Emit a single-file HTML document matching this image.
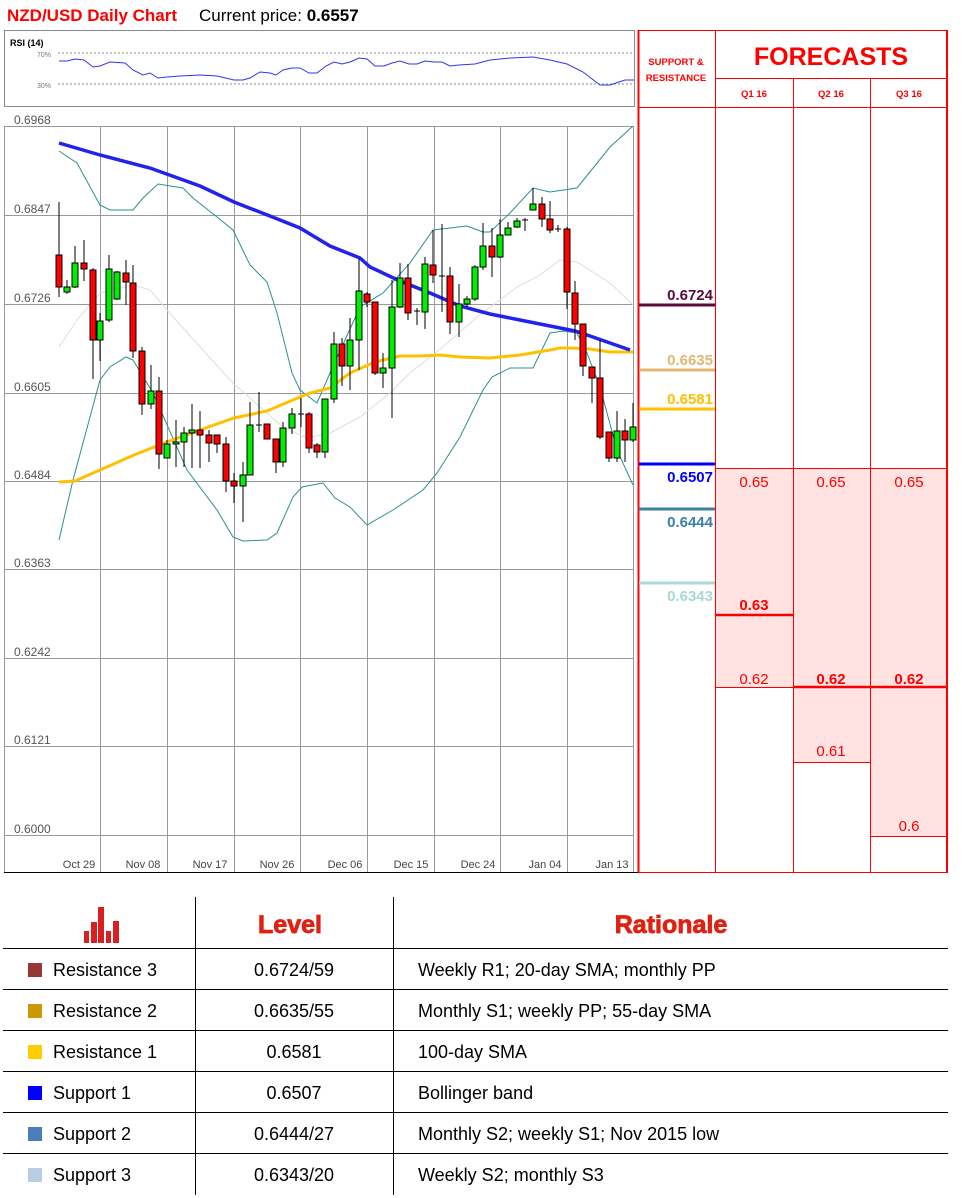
<!DOCTYPE html>
<html><head><meta charset="utf-8"><style>
body{margin:0;background:#fff;width:965px;height:1198px;overflow:hidden;font-family:"Liberation Sans",sans-serif;position:relative}
</style></head><body>
<svg width="965" height="875" style="position:absolute;left:0;top:0" font-family="Liberation Sans, sans-serif">
<text x="7" y="21" font-size="17" font-weight="bold" fill="#ff0000">NZD/USD Daily Chart</text>
<text x="199" y="21" font-size="17" fill="#000">Current price: <tspan font-weight="bold">0.6557</tspan></text>
<rect x="4.5" y="30.5" width="630" height="76" fill="#fff" stroke="#888"/>
<text x="10" y="46" font-size="9" font-weight="bold" fill="#000">RSI (14)</text>
<text x="37" y="57" font-size="7" fill="#777">70%</text>
<text x="37" y="88" font-size="7" fill="#777">30%</text>
<line x1="58" y1="53" x2="634" y2="53" stroke="#666" stroke-dasharray="2,2" stroke-width="0.8"/>
<line x1="58" y1="84" x2="634" y2="84" stroke="#666" stroke-dasharray="2,2" stroke-width="0.8"/>
<polyline fill="none" stroke="#3333ee" stroke-width="1" points="59,61 67,61 75,59 84,60 93,67 100,66 110,62 125,63 133,70 143,75 150,73 158,78 167,77 180,76 200,75 217,76 234,80 243,80 250,78 260,72 270,73 276,75 283,70 292,68 300,68 309,73 317,73 326,66 334,62 342,64 350,62 359,58 367,59 375,66 384,66 392,63 400,61 409,64 417,64 425,61 434,62 442,62 450,66 459,65 475,64 490,60 510,58 533,57 550,60 567,64 583,72 600,85 610,85 625,80 634,80"/>
<g stroke="#999" stroke-width="1">
<line x1="4" y1="126.5" x2="634" y2="126.5"/><line x1="4" y1="215.5" x2="634" y2="215.5"/><line x1="4" y1="304.5" x2="634" y2="304.5"/><line x1="4" y1="393.5" x2="634" y2="393.5"/><line x1="4" y1="481.5" x2="634" y2="481.5"/><line x1="4" y1="569.5" x2="634" y2="569.5"/><line x1="4" y1="658.5" x2="634" y2="658.5"/><line x1="4" y1="746.5" x2="634" y2="746.5"/><line x1="4" y1="835.5" x2="634" y2="835.5"/>
<line x1="100.5" y1="126" x2="100.5" y2="872"/><line x1="167.5" y1="126" x2="167.5" y2="872"/><line x1="234.5" y1="126" x2="234.5" y2="872"/><line x1="300.5" y1="126" x2="300.5" y2="872"/><line x1="367.5" y1="126" x2="367.5" y2="872"/><line x1="434.5" y1="126" x2="434.5" y2="872"/><line x1="500.5" y1="126" x2="500.5" y2="872"/><line x1="567.5" y1="126" x2="567.5" y2="872"/><line x1="633.5" y1="126" x2="633.5" y2="872"/>
<line x1="4.5" y1="126" x2="4.5" y2="872"/>
</g>
<line x1="4" y1="872.5" x2="638" y2="872.5" stroke="#000"/>
<g font-size="12" fill="#555">
<text x="14" y="124">0.6968</text><text x="14" y="213">0.6847</text><text x="14" y="302">0.6726</text><text x="14" y="391">0.6605</text><text x="14" y="479">0.6484</text><text x="14" y="567">0.6363</text><text x="14" y="656">0.6242</text><text x="14" y="744">0.6121</text><text x="14" y="833">0.6000</text>
</g>
<g font-size="11" fill="#444" text-anchor="middle">
<text x="79" y="868">Oct 29</text><text x="143" y="868">Nov 08</text><text x="210" y="868">Nov 17</text><text x="277" y="868">Nov 26</text><text x="345" y="868">Dec 06</text><text x="411" y="868">Dec 15</text><text x="478" y="868">Dec 24</text><text x="545" y="868">Jan 04</text><text x="612" y="868">Jan 13</text>
</g>
<polyline fill="none" stroke="#dddddd" stroke-width="1" points="59,347 77,320 100,293 133,285 150,290 167,310 200,347 233,383 260,407 283,427 307,438 330,433 360,417 390,393 410,373 443,347 477,317 517,287 537,277 560,260 577,262 610,283 633,305"/>
<polyline fill="none" stroke="#2a9090" stroke-width="1" points="59,151 77,163 100,205 110,210 133,210 143,198 158,184 183,188 193,198 217,217 233,230 250,265 267,282 277,313 292,373 300,390 317,403 330,373 360,307 383,293 410,263 433,230 467,226 483,232 490,232 510,213 533,188 550,192 577,188 610,147 633,126"/>
<polyline fill="none" stroke="#2a9090" stroke-width="1" points="59,540 73,480 100,380 110,367 126,357 133,360 153,393 187,470 217,510 233,537 243,541 267,540 277,533 293,497 302,487 323,483 335,498 350,507 367,525 393,510 423,490 437,473 460,437 483,390 492,377 510,368 533,368 550,333 563,331 577,333 587,353 600,387 617,450 633,485"/>
<polyline fill="none" stroke="#ffc000" stroke-width="3" points="59,482 75,481 100,470 134,455 167,442 200,430 234,418 267,411 300,397 310,393 330,388 350,373 375,362 400,356 420,356 440,355 460,357 490,358 520,355 550,350 560,348 570,348 590,349 610,352 633,352"/>
<polyline fill="none" stroke="#2222ee" stroke-width="3.5" points="59,143 100,155 150,168 200,186 234,202 275,218 300,228 330,246 360,258 370,267 400,281 430,293 460,306 490,314 520,320 550,326 575,331 590,336 610,343 630,350"/>
<path stroke="#000" stroke-width="1" fill="none" d="M59 202V297M67 280V294M75 246V288M84 240V281M93 268V379M100 313V361M109 255V322M117 271V300M126 260V305M133 265V358M142 347V415M151 365V409M159 377V469M167 440V458M176 420V467M184 427V467M192 404V468M200 411V468M209 430V462M217 435V453M226 437V492M234 473V503M243 462V522M250 402V475M259 392V432M267 424V439M276 439V473M283 422V467M292 408V434M301 398V427M309 412V453M317 443V458M325 399V458M334 332V403M342 338V386M350 318V390M359 259V370M367 292V307M375 302V375M383 353V388M392 280V418M400 263V308M408 264V320M417 308V325M425 257V329M433 230V283M442 224V312M450 267V334M459 284V337M467 296V307M475 265V301M483 223V270M492 228V277M500 219V258M508 222V235M517 218V228M525 218V231M533 188V210M542 197V227M550 201V233M558 225V232M567 227V309M575 281V340M583 324V376M592 367V403M600 340V439M609 432V462M617 411V462M625 419V462M633 403V442M256 425h6M298 414h6M414 311h6M439 276h6M522 220h6M555 229h6"/>
<g fill="#ff0000" stroke="#000" stroke-width="1">
<rect x="56" y="255" width="6" height="32"/><rect x="81" y="263" width="6" height="6"/><rect x="90" y="270" width="6" height="70"/><rect x="123" y="273" width="6" height="9"/><rect x="130" y="283" width="6" height="68"/><rect x="139" y="351" width="6" height="53"/><rect x="156" y="391" width="6" height="63"/><rect x="197" y="430" width="6" height="5"/><rect x="206" y="435" width="6" height="8"/><rect x="214" y="435" width="6" height="9"/><rect x="223" y="444" width="6" height="37"/><rect x="231" y="481" width="6" height="5"/><rect x="264" y="424" width="6" height="15"/><rect x="273" y="439" width="6" height="23"/><rect x="306" y="414" width="6" height="34"/><rect x="314" y="445" width="6" height="7"/><rect x="339" y="344" width="6" height="22"/><rect x="364" y="294" width="6" height="8"/><rect x="372" y="302" width="6" height="71"/><rect x="405" y="278" width="6" height="35"/><rect x="430" y="265" width="6" height="10"/><rect x="447" y="276" width="6" height="46"/><rect x="489" y="246" width="6" height="11"/><rect x="539" y="204" width="6" height="15"/><rect x="547" y="219" width="6" height="11"/><rect x="564" y="229" width="6" height="63"/><rect x="572" y="293" width="6" height="31"/><rect x="580" y="324" width="6" height="42"/><rect x="589" y="367" width="6" height="11"/><rect x="597" y="378" width="6" height="59"/><rect x="606" y="432" width="6" height="26"/><rect x="622" y="431" width="6" height="9"/>
</g>
<g fill="#00ee00" stroke="#000" stroke-width="1">
<rect x="64" y="287" width="6" height="5"/><rect x="72" y="263" width="6" height="24"/><rect x="97" y="321" width="6" height="19"/><rect x="106" y="269" width="6" height="51"/><rect x="114" y="272" width="6" height="27"/><rect x="148" y="391" width="6" height="13"/><rect x="164" y="444" width="6" height="14"/><rect x="173" y="442" width="6" height="2"/><rect x="181" y="433" width="6" height="9"/><rect x="189" y="430" width="6" height="3"/><rect x="240" y="475" width="6" height="11"/><rect x="247" y="425" width="6" height="50"/><rect x="280" y="428" width="6" height="34"/><rect x="289" y="414" width="6" height="14"/><rect x="322" y="399" width="6" height="53"/><rect x="331" y="344" width="6" height="55"/><rect x="347" y="340" width="6" height="26"/><rect x="356" y="291" width="6" height="49"/><rect x="380" y="368" width="6" height="5"/><rect x="389" y="307" width="6" height="61"/><rect x="397" y="278" width="6" height="29"/><rect x="422" y="264" width="6" height="48"/><rect x="456" y="304" width="6" height="18"/><rect x="464" y="299" width="6" height="5"/><rect x="472" y="267" width="6" height="32"/><rect x="480" y="246" width="6" height="21"/><rect x="497" y="235" width="6" height="22"/><rect x="505" y="228" width="6" height="7"/><rect x="514" y="221" width="6" height="6"/><rect x="530" y="204" width="6" height="6"/><rect x="614" y="431" width="6" height="27"/><rect x="630" y="427" width="6" height="13"/>
</g>
<rect x="715" y="468" width="232" height="219" fill="#ffe3e3"/>
<rect x="793" y="687" width="77" height="75" fill="#ffe3e3"/>
<rect x="870" y="687" width="77" height="149" fill="#ffe3e3"/>
<g stroke="#ff0000" stroke-width="1" fill="none">
<rect x="638.5" y="30.5" width="309" height="842"/>
<line x1="715.5" y1="30" x2="715.5" y2="872"/>
<line x1="793.5" y1="78" x2="793.5" y2="872"/>
<line x1="870.5" y1="78" x2="870.5" y2="872"/>
<line x1="715" y1="78.5" x2="948" y2="78.5"/>
<line x1="638" y1="107.5" x2="948" y2="107.5"/>
<line x1="715" y1="468.5" x2="948" y2="468.5"/>
<line x1="715" y1="687.5" x2="793" y2="687.5"/>
<line x1="793" y1="762.5" x2="870" y2="762.5"/>
<line x1="870" y1="836.5" x2="948" y2="836.5"/>
</g>
<line x1="638.5" y1="30" x2="638.5" y2="872" stroke="#ff0000" stroke-width="2"/>
<line x1="947" y1="30" x2="947" y2="872" stroke="#ff0000" stroke-width="2"/>
<line x1="715" y1="615" x2="793" y2="615" stroke="#ff0000" stroke-width="2.5"/>
<line x1="793" y1="687" x2="948" y2="687" stroke="#ff0000" stroke-width="2.5"/>
<g fill="#ff0000" font-weight="bold" text-anchor="middle">
<text x="676" y="65" font-size="9.5">SUPPORT &amp;</text>
<text x="676" y="81" font-size="9.5">RESISTANCE</text>
<text x="831" y="65" font-size="25">FORECASTS</text>
<text x="754" y="97" font-size="9.5">Q1 16</text>
<text x="831" y="97" font-size="9.5">Q2 16</text>
<text x="909" y="97" font-size="9.5">Q3 16</text>
</g>
<g stroke-width="3">
<line x1="639" y1="305" x2="715" y2="305" stroke="#5a0a3a"/>
<line x1="639" y1="370" x2="715" y2="370" stroke="#e0b870"/>
<line x1="639" y1="409" x2="715" y2="409" stroke="#ffc000"/>
<line x1="639" y1="464" x2="715" y2="464" stroke="#0000ff"/>
<line x1="639" y1="509" x2="715" y2="509" stroke="#3a7fa6"/>
<line x1="639" y1="583" x2="715" y2="583" stroke="#a8d8d8"/>
</g>
<g font-size="15" font-weight="bold" text-anchor="end">
<text x="713" y="300" fill="#5a0a3a">0.6724</text>
<text x="713" y="365" fill="#e0b870">0.6635</text>
<text x="713" y="404" fill="#ffc000">0.6581</text>
<text x="713" y="482" fill="#0000ff">0.6507</text>
<text x="713" y="527" fill="#3a7fa6">0.6444</text>
<text x="713" y="601" fill="#a8d8d8">0.6343</text>
</g>
<g font-size="15" fill="#ff0000" text-anchor="middle">
<text x="754" y="487">0.65</text><text x="831" y="487">0.65</text><text x="909" y="487">0.65</text>
<text x="754" y="610" font-weight="bold">0.63</text>
<text x="754" y="684">0.62</text><text x="831" y="684" font-weight="bold">0.62</text><text x="909" y="684" font-weight="bold">0.62</text>
<text x="831" y="756">0.61</text>
<text x="909" y="831">0.6</text>
</g>
</svg>
<svg width="965" height="323" style="position:absolute;left:0;top:875" font-family="Liberation Sans, sans-serif">
<g fill="#d92020">
<rect x="84" y="56" width="5" height="12"/><rect x="91" y="47" width="6" height="21"/><rect x="98" y="32" width="6" height="36"/><rect x="106" y="56" width="5" height="12"/><rect x="113" y="46" width="6" height="22"/>
</g>
<g stroke="#000" stroke-width="1">
<line x1="195.5" y1="22" x2="195.5" y2="320"/><line x1="393.5" y1="22" x2="393.5" y2="320"/>
<line x1="3" y1="73.5" x2="948" y2="73.5"/><line x1="3" y1="114.5" x2="948" y2="114.5"/><line x1="3" y1="155.5" x2="948" y2="155.5"/><line x1="3" y1="196.5" x2="948" y2="196.5"/><line x1="3" y1="237.5" x2="948" y2="237.5"/><line x1="3" y1="278.5" x2="948" y2="278.5"/>
</g>
<g fill="#e02010" font-weight="900" font-size="25" text-anchor="middle" stroke="#e02010" stroke-width="0.8">
<text x="290" y="58">Level</text><text x="671" y="58">Rationale</text>
</g>
<rect x="28" y="88" width="14" height="14" fill="#953735"/>
<rect x="28" y="129" width="14" height="14" fill="#cc9900"/>
<rect x="28" y="170" width="14" height="14" fill="#ffcc00"/>
<rect x="28" y="211" width="14" height="14" fill="#0000ff"/>
<rect x="28" y="252" width="14" height="14" fill="#4a7ebb"/>
<rect x="28" y="293" width="14" height="14" fill="#b9cde5"/>
<g font-size="18" fill="#000">
<text x="53" y="101">Resistance 3</text><text x="53" y="142">Resistance 2</text><text x="53" y="183">Resistance 1</text><text x="53" y="224">Support 1</text><text x="53" y="265">Support 2</text><text x="53" y="306">Support 3</text>
<g text-anchor="middle"><text x="294" y="101">0.6724/59</text><text x="294" y="142">0.6635/55</text><text x="294" y="183">0.6581</text><text x="294" y="224">0.6507</text><text x="294" y="265">0.6444/27</text><text x="294" y="306">0.6343/20</text></g>
<text x="418" y="101">Weekly R1; 20-day SMA; monthly PP</text><text x="418" y="142">Monthly S1; weekly PP; 55-day SMA</text><text x="418" y="183">100-day SMA</text><text x="418" y="224">Bollinger band</text><text x="418" y="265">Monthly S2; weekly S1; Nov 2015 low</text><text x="418" y="306">Weekly S2; monthly S3</text>
</g>
</svg>
</body></html>
